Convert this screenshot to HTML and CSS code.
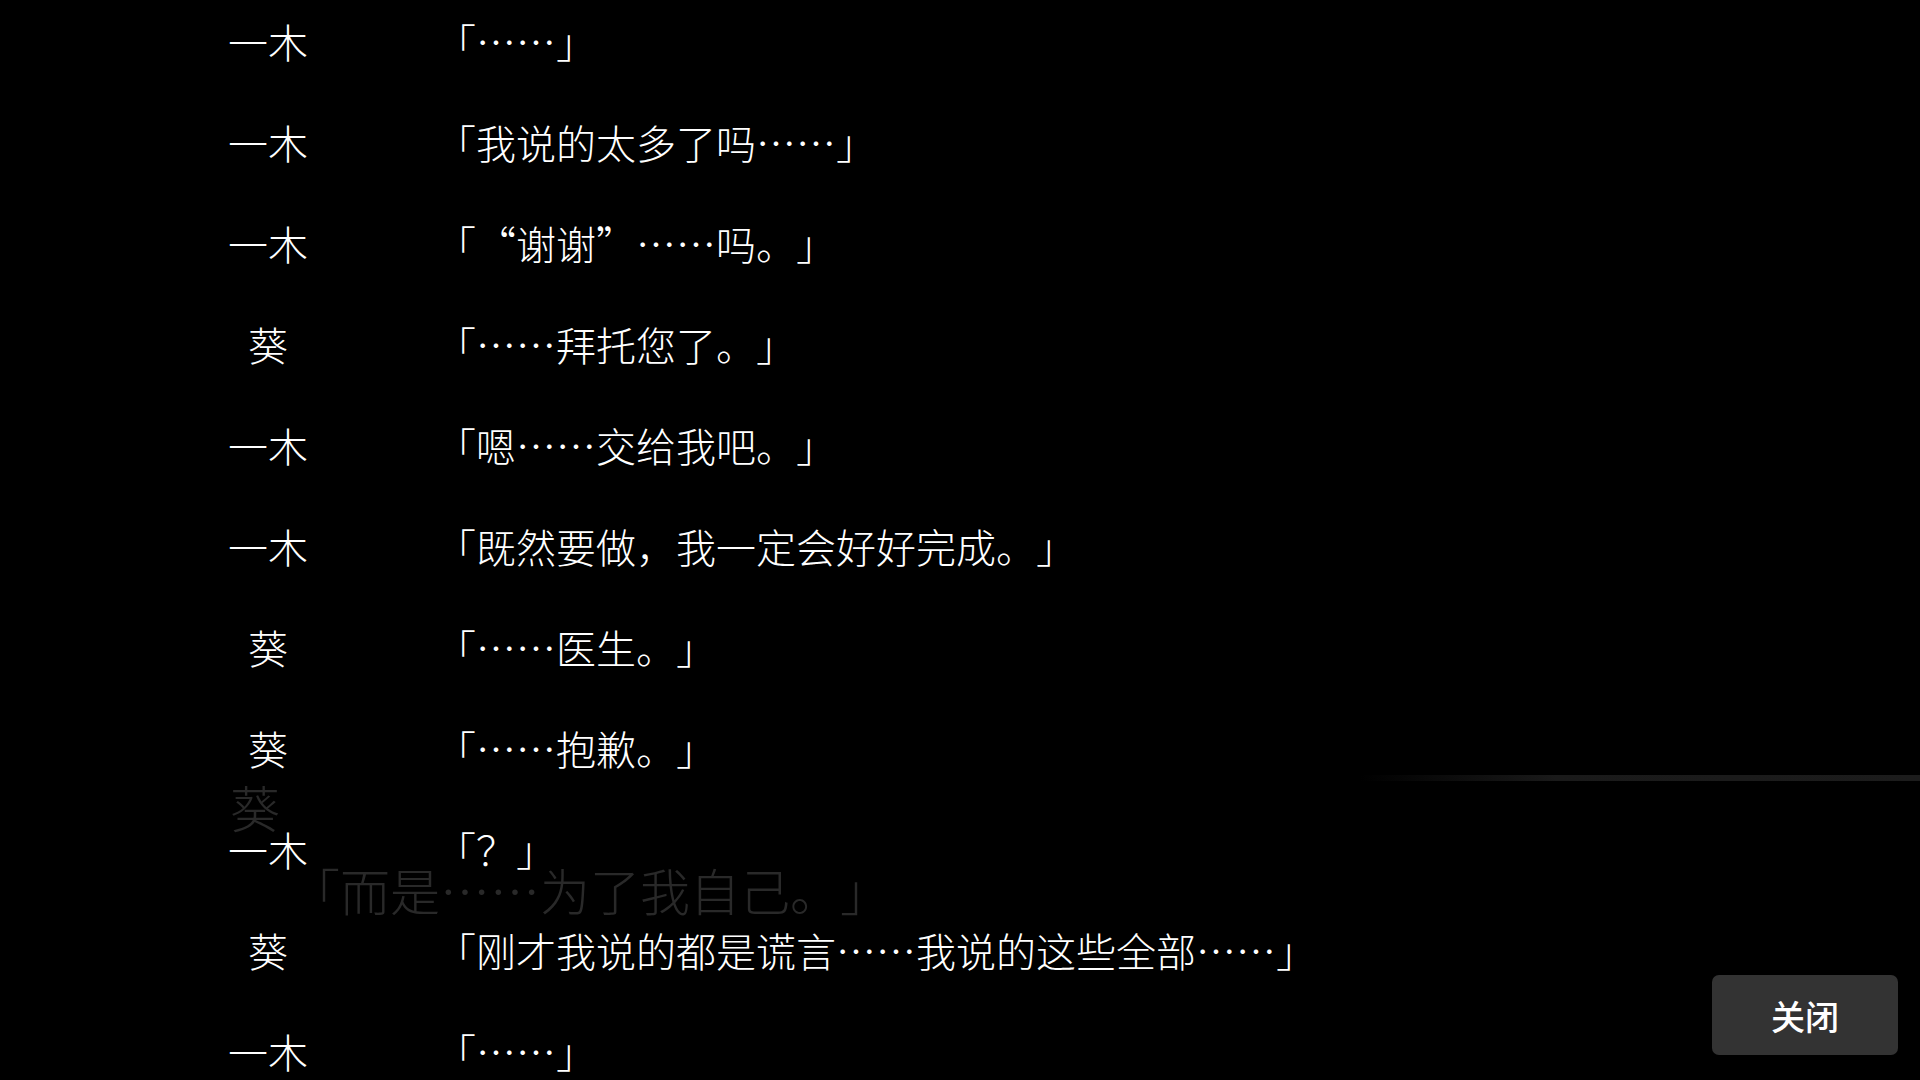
FILE: index.html
```html
<!DOCTYPE html>
<html lang="zh-CN">
    <head>
        <meta charset="utf-8">
        <meta name="viewport" content="width=device-width, initial-scale=1">
        <title>对话记录</title>
        <link rel="stylesheet" href="styles.css">
    </head>
    <body>
        <div class="screen">
            <ul class="backlog">
                <li class="entry"><span class="name">一木</span><span class="line">「……」</span></li>
                <li class="entry"><span class="name">一木</span><span class="line">「我说的太多了吗……」</span></li>
                <li class="entry"><span class="name">一木</span><span class="line">「“谢谢”……吗。」</span></li>
                <li class="entry"><span class="name">葵</span><span class="line">「……拜托您了。」</span></li>
                <li class="entry"><span class="name">一木</span><span class="line">「嗯……交给我吧。」</span></li>
                <li class="entry"><span class="name">一木</span><span class="line">「既然要做，我一定会好好完成。」</span></li>
                <li class="entry"><span class="name">葵</span><span class="line">「……医生。」</span></li>
                <li class="entry"><span class="name">葵</span><span class="line">「……抱歉。」</span></li>
                <li class="entry"><span class="name">一木</span><span class="line">「？」</span></li>
                <li class="entry"><span class="name">葵</span><span class="line">「刚才我说的都是谎言……我说的这些全部……」</span></li>
                <li class="entry"><span class="name">一木</span><span class="line">「……」</span></li>
            </ul>

            <!-- the message window underneath, still fading out -->
            <div class="ghost">
                <div class="ghost-rule"></div>
                <div class="ghost-name">葵</div>
                <div class="ghost-text">「而是……为了我自己。」</div>
            </div>

            <button class="close-btn" type="button">关闭</button>
        </div>
    </body>
</html>
```

FILE: styles.css
```css
html, body {
    margin: 0;
    height: 100%;
    background: #000;
}
body {
    font-family: "Noto Sans CJK SC", "Noto Sans", sans-serif;
    font-weight: 300;
    color: #fff;
    overflow: hidden;
    /* keep full-width punctuation, as the game draws it */
    text-spacing-trim: space-all;
}
.screen {
    position: relative;
    width: 1920px;
    height: 1080px;
    overflow: hidden;
}
.backlog {
    list-style: none;
    margin: -10px 0 0;
    padding: 0 0 0 198px;
}
.entry {
    display: grid;
    grid-template-columns: 140px 1fr;
    column-gap: 98px;
    align-items: center;
    height: 101px;
    font-size: 40px;
    line-height: 1;
}
.name {
    text-align: center;
}
.line {
    white-space: nowrap;
}

/* fading message window */
.ghost {
    position: absolute;
    left: 0;
    top: 0;
    width: 100%;
    height: 100%;
    pointer-events: none;
    color: #292929;
}
.ghost-rule {
    position: absolute;
    left: 1360px;
    right: 0;
    top: 775px;
    height: 6px;
    background: linear-gradient(to right, rgba(30, 30, 30, 0), #1a1a1a 35%, #1c1c1c);
}
.ghost-name {
    position: absolute;
    left: 230px;
    top: 774px;
    font-size: 50px;
    line-height: 1.3;
}
.ghost-text {
    position: absolute;
    left: 290px;
    top: 857px;
    font-size: 50px;
    line-height: 1.3;
    white-space: nowrap;
}

.close-btn {
    position: absolute;
    left: 1712px;
    top: 975px;
    width: 186px;
    height: 80px;
    border: 0;
    border-radius: 7px;
    background: #333;
    color: #fff;
    font-family: inherit;
    font-size: 34px;
    font-weight: 500;
    text-spacing-trim: space-all;
    padding: 0;
    cursor: pointer;
}
```
